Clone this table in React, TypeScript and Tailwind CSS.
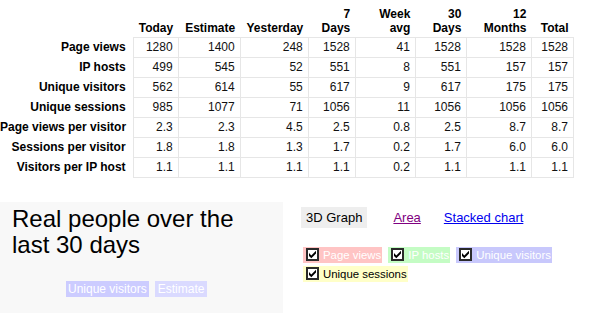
import React from 'react';

const HEADERS: [string, string][] = [
    ['', 'Today'],
    ['', 'Estimate'],
    ['', 'Yesterday'],
    ['7', 'Days'],
    ['Week', 'avg'],
    ['30', 'Days'],
    ['12', 'Months'],
    ['', 'Total'],
];

const WIDTHS = [133, 45, 62, 68, 47, 60, 51, 65, 42];

const ROWS: [string, string[]][] = [
    ['Page views', ['1280', '1400', '248', '1528', '41', '1528', '1528', '1528']],
    ['IP hosts', ['499', '545', '52', '551', '8', '551', '157', '157']],
    ['Unique visitors', ['562', '614', '55', '617', '9', '617', '175', '175']],
    ['Unique sessions', ['985', '1077', '71', '1056', '11', '1056', '1056', '1056']],
    ['Page views per visitor', ['2.3', '2.3', '4.5', '2.5', '0.8', '2.5', '8.7', '8.7']],
    ['Sessions per visitor', ['1.8', '1.8', '1.3', '1.7', '0.2', '1.7', '6.0', '6.0']],
    ['Visitors per IP host', ['1.1', '1.1', '1.1', '1.1', '0.2', '1.1', '1.1', '1.1']],
];

const SERIES = [
    { name: 'Page views', bg: 'bg-[#ffc4c4]', text: 'text-white' },
    { name: 'IP hosts', bg: 'bg-[#c4fcc4]', text: 'text-white' },
    { name: 'Unique visitors', bg: 'bg-[#c8c8fc]', text: 'text-white' },
    { name: 'Unique sessions', bg: 'bg-[#ffffc8]', text: 'text-black' },
];

function CheckBox() {
    return (
        <svg width="13" height="13" viewBox="0 0 13 13" className="shrink-0">
            <rect x="0" y="0" width="13" height="13" fill="#2a2a2a" />
            <rect x="2" y="2" width="9" height="9" fill="#fff" />
            <path d="M3 5 L5.3 7.4 L10 2.8 L10 5.6 L5.3 10.3 L3 8 Z" fill="#000" />
        </svg>
    );
}

export default function App() {
    return (
        <div className="w-[603px] h-[313px] overflow-hidden bg-white font-['Liberation_Sans',Arial,sans-serif] text-black">
            <table className="table-fixed border-collapse w-[574px] text-[12px]">
                <colgroup>
                    {WIDTHS.map((w, i) => (
                        <col key={i} style={{ width: w }} />
                    ))}
                </colgroup>
                <thead>
                    <tr className="h-[37px]">
                        <th />
                        {HEADERS.map(([a, b], i) => (
                            <th key={i} className="align-bottom text-right font-bold leading-[14px] px-[5px] pb-[2px]">
                                {a && <div>{a}</div>}
                                <div>{b}</div>
                            </th>
                        ))}
                    </tr>
                </thead>
                <tbody>
                    {ROWS.map(([label, vals]) => (
                        <tr key={label} className="h-[20px]">
                            <th className="text-right font-bold pr-[7px] whitespace-nowrap p-0 leading-[14px]">{label}</th>
                            {vals.map((v, i) => (
                                <td key={i} className="border border-[#e6e6e6] text-right px-[5px] py-0 leading-[14px] text-[#111]">
                                    {v}
                                </td>
                            ))}
                        </tr>
                    ))}
                </tbody>
            </table>

            <div className="flex mt-[24px]">
                <div className="w-[283px] h-[120px] bg-[#f8f8f8] pl-[12px] pt-[4px]">
                    <div className="text-[24px] leading-[26px] pr-[12px]">Real people over the last 30 days</div>
                    <div className="flex gap-[6px] pl-[54px] mt-[23px] text-[12px] leading-[14px] text-white">
                        <span className="bg-[#ccccff] px-[2px] py-[1px]">Unique visitors</span>
                        <span className="bg-[#dadaff] px-[3px] py-[1px]">Estimate</span>
                    </div>
                </div>

                <div className="pl-[18px] pt-[5px]">
                    <div className="flex items-center text-[13px] leading-[15px]">
                        <span className="bg-[#eeeeee] px-[5px] py-[3px]">3D Graph</span>
                        <a href="#" className="ml-[26px] text-[#800080] underline">Area</a>
                        <a href="#" className="ml-[23px] text-[#0000ee] underline">Stacked chart</a>
                    </div>
                    <div className="flex flex-wrap w-[260px] gap-x-[6px] gap-y-[3px] mt-[19px] ml-[2px] text-[11.4px] leading-[14px]">
                        {SERIES.map(s => (
                            <label key={s.name} className={`flex items-center gap-[4px] pl-[3px] h-[16px] ${s.bg} ${s.text}`}>
                                <CheckBox />
                                <span className="pr-[1px]">{s.name}</span>
                            </label>
                        ))}
                    </div>
                </div>
            </div>
        </div>
    );
}
